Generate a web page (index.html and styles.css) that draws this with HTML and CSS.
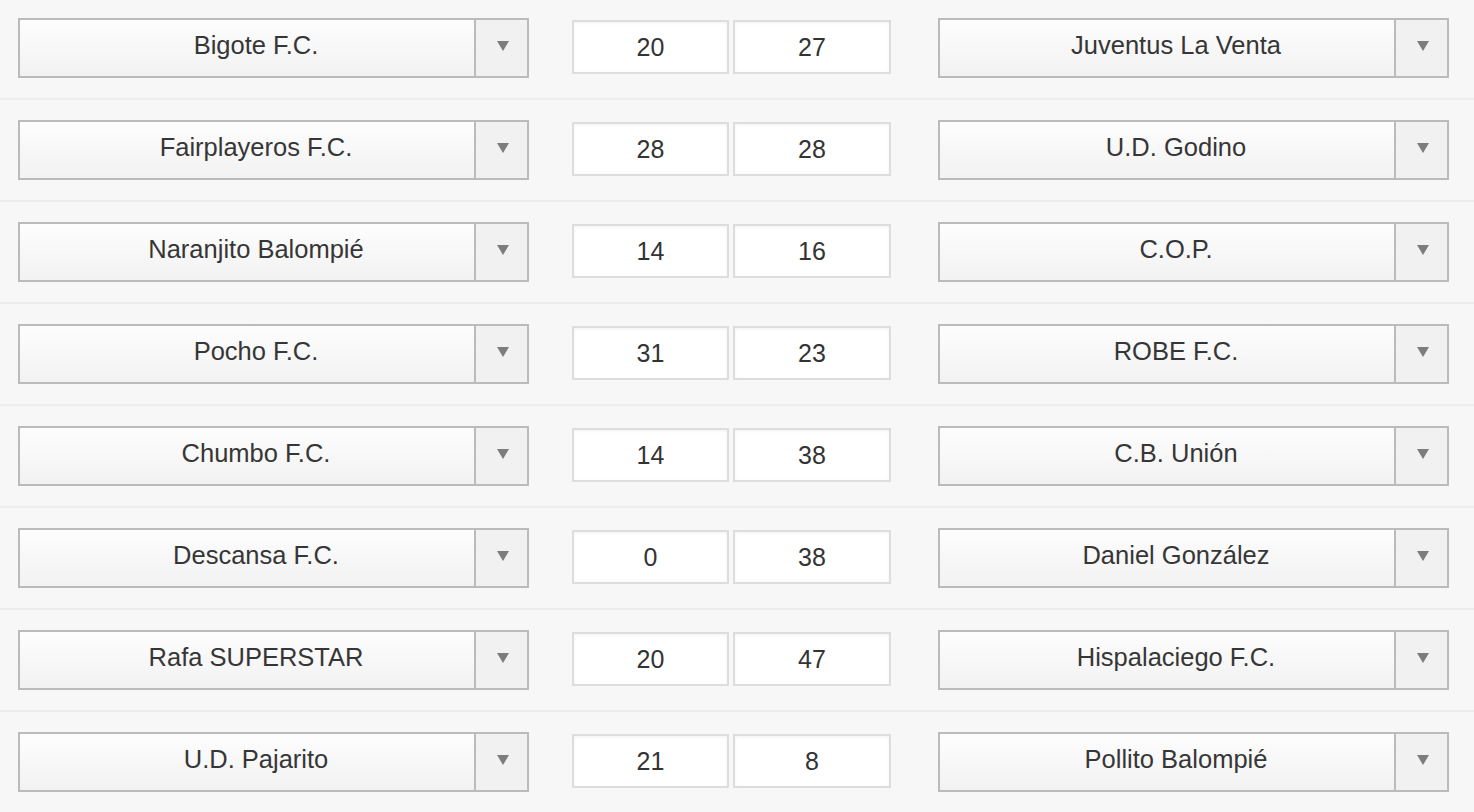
FILE: index.html
```html
<!DOCTYPE html>
<html lang="es">
<head>
<meta charset="utf-8">
<title>Resultados</title>
<link rel="stylesheet" href="styles.css">
</head>
<body>
<div class="list">
  <div class="row">
    <div class="select"><span class="label">Bigote F.C.</span><span class="arrow"></span></div>
    <div class="scores"><div class="score">20</div><div class="score">27</div></div>
    <div class="select"><span class="label">Juventus La Venta</span><span class="arrow"></span></div>
  </div>
  <div class="row">
    <div class="select"><span class="label">Fairplayeros F.C.</span><span class="arrow"></span></div>
    <div class="scores"><div class="score">28</div><div class="score">28</div></div>
    <div class="select"><span class="label">U.D. Godino</span><span class="arrow"></span></div>
  </div>
  <div class="row">
    <div class="select"><span class="label">Naranjito Balompié</span><span class="arrow"></span></div>
    <div class="scores"><div class="score">14</div><div class="score">16</div></div>
    <div class="select"><span class="label">C.O.P.</span><span class="arrow"></span></div>
  </div>
  <div class="row">
    <div class="select"><span class="label">Pocho F.C.</span><span class="arrow"></span></div>
    <div class="scores"><div class="score">31</div><div class="score">23</div></div>
    <div class="select"><span class="label">ROBE F.C.</span><span class="arrow"></span></div>
  </div>
  <div class="row">
    <div class="select"><span class="label">Chumbo F.C.</span><span class="arrow"></span></div>
    <div class="scores"><div class="score">14</div><div class="score">38</div></div>
    <div class="select"><span class="label">C.B. Unión</span><span class="arrow"></span></div>
  </div>
  <div class="row">
    <div class="select"><span class="label">Descansa F.C.</span><span class="arrow"></span></div>
    <div class="scores"><div class="score">0</div><div class="score">38</div></div>
    <div class="select"><span class="label">Daniel González</span><span class="arrow"></span></div>
  </div>
  <div class="row">
    <div class="select"><span class="label">Rafa SUPERSTAR</span><span class="arrow"></span></div>
    <div class="scores"><div class="score">20</div><div class="score">47</div></div>
    <div class="select"><span class="label">Hispalaciego F.C.</span><span class="arrow"></span></div>
  </div>
  <div class="row">
    <div class="select"><span class="label">U.D. Pajarito</span><span class="arrow"></span></div>
    <div class="scores"><div class="score">21</div><div class="score">8</div></div>
    <div class="select"><span class="label">Pollito Balompié</span><span class="arrow"></span></div>
  </div>
</div>
</body>
</html>
```
FILE: styles.css
```css
html, body {
  margin: 0;
  padding: 0;
  background: #f7f7f7;
  font-family: "Liberation Sans", Arial, Helvetica, sans-serif;
  color: #333;
  overflow: hidden;
}

.list {
  margin-top: -2px;
}

.row {
  display: flex;
  align-items: flex-start;
  padding: 20px 0 20px 18px;
  border-bottom: 2px solid #ececec;
}

.select {
  box-sizing: border-box;
  width: 511px;
  height: 60px;
  border: 2px solid #bbb;
  display: flex;
  background: linear-gradient(#fdfdfd, #f2f2f2);
}

.label {
  flex: 1;
  box-sizing: border-box;
  padding: 1px 0 7px 18px;
  text-align: center;
  font-size: 25.5px;
  line-height: 48px;
  color: #363636;
  white-space: nowrap;
}

.arrow {
  width: 51px;
  border-left: 2px solid #bbb;
  background: #f1f1f1;
  display: flex;
  align-items: center;
  justify-content: center;
  padding-bottom: 4px;
}

.arrow::after {
  content: "";
  width: 0;
  height: 0;
  border-left: 6px solid transparent;
  border-right: 6px solid transparent;
  border-top: 10px solid #7d7d7d;
  margin-left: 2px;
}

.scores {
  display: flex;
  gap: 4px;
  margin: 2px 47px 0 43px;
}

.score {
  box-sizing: border-box;
  width: 157px;
  height: 54px;
  border: 2px solid #ddd;
  background: #fff;
  box-shadow: inset 0 1px 3px rgba(0, 0, 0, 0.06);
  text-align: center;
  font-size: 25px;
  line-height: 50px;
  color: #333;
}

.score + .score {
  width: 158px;
}
```
